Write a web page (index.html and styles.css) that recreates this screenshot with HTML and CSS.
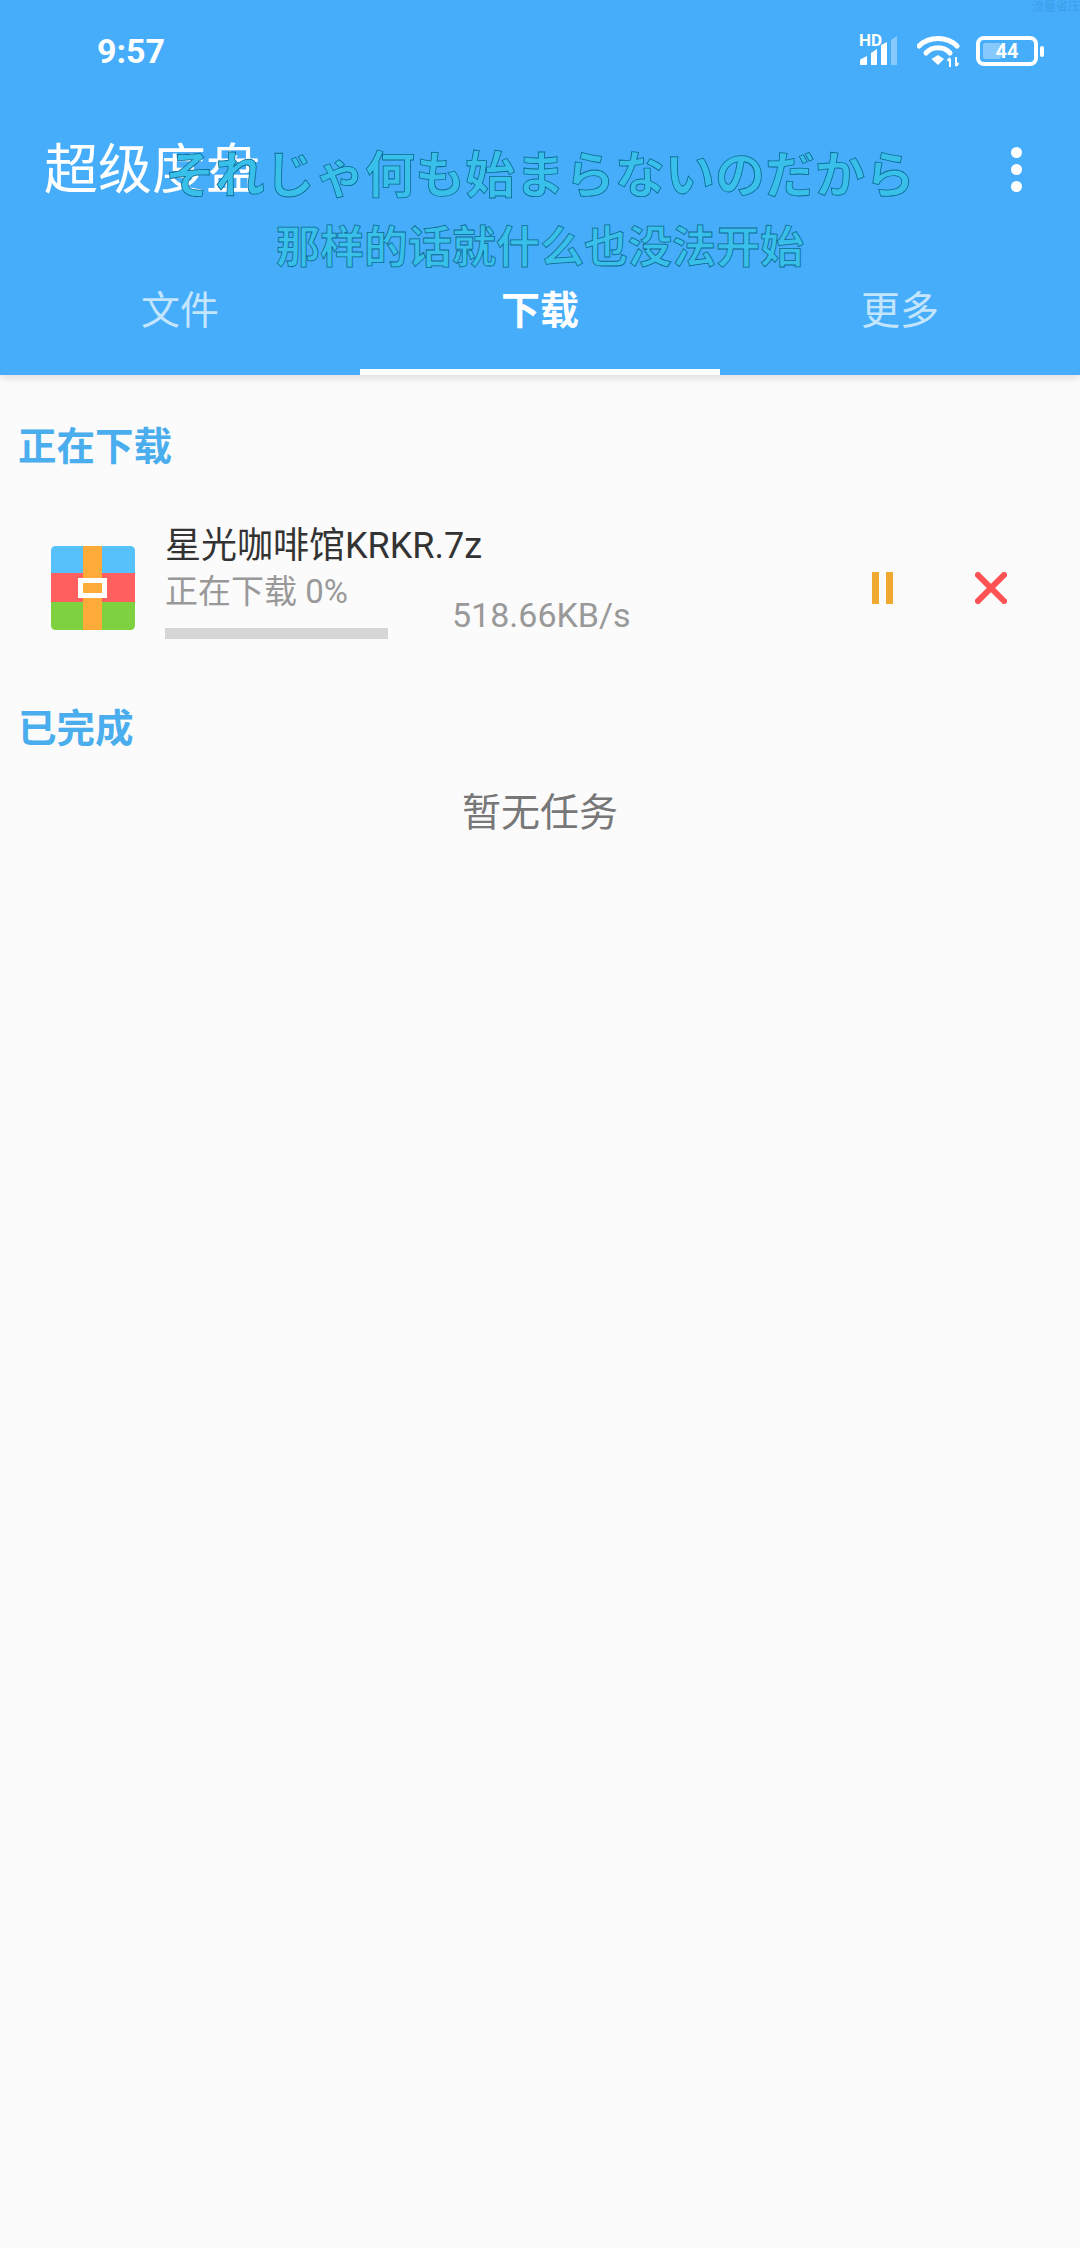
FILE: index.html
```html
<!DOCTYPE html>
<html>
<head>
    <title>超级度盘</title>
    <meta charset="utf-8">
    <link rel="stylesheet" href="styles.css">
</head>
<body>
    <div class="header">
        <div class="status-bar">
            <span class="time">9:57</span>
            <span class="carrier-note">流量省压</span>
            <div class="status-icons">
                <div class="signal">
                    <span class="hd">HD</span>
                    <svg width="40" height="30" viewBox="0 0 40 30">
                        <path d="M0 29 L0 25 Q0 24 1 23 L7 20 L7 29 Z M11 29 L11 17 L17 13 L17 29 Z M21 29 L21 9 L27 6 L27 29 Z" fill="#fff"/>
                        <path d="M31 29 L31 4 L37 0 L37 29 Z" fill="#fff" fill-opacity="0.35"/>
                    </svg>
                </div>
                <svg class="wifi" width="44" height="32" viewBox="0 0 44 32">
                    <path d="M2 10 C12 0 30 0 40 10" fill="none" stroke="#fff" stroke-width="5" stroke-linecap="round"/>
                    <path d="M9 17 C15 10 27 10 33 17" fill="none" stroke="#fff" stroke-width="5" stroke-linecap="round"/>
                    <path d="M14.5 23 L21 19 L27 23 L21 29 Z" fill="#fff"/>
                    <path d="M33 31 L33 23 M30.5 25 L33 22 M39 21 L39 30 M39 30 L41.5 27" fill="none" stroke="#fff" stroke-width="2"/>
                </svg>
                <div class="battery">
                    <div class="battery-body">
                        <div class="battery-fill"></div>
                        <span class="battery-num">44</span>
                    </div>
                    <div class="battery-nub"></div>
                </div>
            </div>
        </div>
        <div class="toolbar">
            <span class="app-title">超级度盘</span>
            <div class="more"><i></i><i></i><i></i></div>
        </div>
        <div class="tabs">
            <div class="tab">文件</div>
            <div class="tab active">下载</div>
            <div class="tab">更多</div>
        </div>
    </div>

    <div class="subtitles">
        <div class="sub-jp">それじゃ何も始まらないのだから</div>
        <div class="sub-cn">那样的话就什么也没法开始</div>
    </div>

    <div class="section-title first">正在下载</div>
    <div class="task">
        <svg class="task-icon" width="84" height="84" viewBox="0 0 84 84">
            <path d="M0 27 L0 5 Q0 0 5 0 L79 0 Q84 0 84 5 L84 27 Z" fill="#56c1fb"/>
            <rect x="0" y="27" width="84" height="29" fill="#ff5f5f"/>
            <path d="M0 56 L84 56 L84 79 Q84 84 79 84 L5 84 Q0 84 0 79 Z" fill="#7ed23f"/>
            <rect x="32" y="0" width="19" height="84" fill="#ffab3a"/>
            <rect x="29.5" y="34.5" width="24" height="15" fill="#ffab3a" stroke="#fff" stroke-width="5"/>
        </svg>
        <div class="task-info">
            <div class="task-name">星光咖啡馆KRKR.7z</div>
            <div class="task-status">正在下载 0%</div>
            <div class="progress"></div>
        </div>
        <div class="task-speed">518.66KB/s</div>
        <svg class="task-btn pause" width="21" height="32" viewBox="0 0 21 32">
            <rect x="0" y="0" width="7" height="32" fill="#f0a930"/>
            <rect x="14" y="0" width="7" height="32" fill="#f0a930"/>
        </svg>
        <svg class="task-btn cancel" width="32" height="32" viewBox="0 0 32 32">
            <path d="M3 3 L29 29 M29 3 L3 29" stroke="#ff5252" stroke-width="6" stroke-linecap="square" fill="none"/>
        </svg>
    </div>

    <div class="section-title">已完成</div>
    <div class="empty">暂无任务</div>
</body>
</html>
```

FILE: styles.css
```css
* {
    box-sizing: border-box;
}
body {
    margin: 0;
    width: 1080px;
    height: 2248px;
    overflow: hidden;
    position: relative;
    background-color: #fbfbfb;
    font-family: Roboto, "Noto Sans CJK SC", sans-serif;
}
.header {
    height: 375px;
    background-color: #46adfb;
    box-shadow: 0 3px 8px rgba(0,0,0,0.12);
    color: white;
}
.status-bar {
    height: 100px;
    display: flex;
    align-items: flex-start;
    padding: 30px 36px 0 97px;
    position: relative;
}
.time {
    font-size: 34px;
    font-weight: 700;
    line-height: 42px;
}
.carrier-note {
    position: absolute;
    top: 0;
    right: 0;
    font-size: 12px;
    line-height: 14px;
    color: #3c9fe8;
}
.status-icons {
    margin-left: auto;
    margin-top: 6px;
    display: flex;
    align-items: flex-start;
    gap: 15px;
}
.signal {
    width: 42px;
    height: 30px;
    position: relative;
}
.signal svg {
    display: block;
}
.hd {
    position: absolute;
    top: -4px;
    left: -1px;
    font-size: 17px;
    line-height: 17px;
    font-weight: 700;
}
.battery {
    display: flex;
    align-items: center;
    gap: 2px;
    height: 30px;
}
.battery-body {
    width: 62px;
    height: 30px;
    border: 4px solid white;
    border-radius: 8px;
    position: relative;
    text-align: center;
}
.battery-fill {
    position: absolute;
    left: 3px;
    top: 3px;
    bottom: 3px;
    width: 18px;
    border-radius: 2px;
    background-color: rgba(255,255,255,0.35);
}
.battery-num {
    position: relative;
    font-size: 20px;
    font-weight: 700;
    line-height: 22px;
    display: block;
}
.battery-nub {
    width: 4px;
    height: 11px;
    border-radius: 2px;
    background-color: white;
}
.toolbar {
    height: 136px;
    display: flex;
    align-items: center;
    justify-content: space-between;
    padding: 0 58px 0 44px;
}
.app-title {
    font-size: 54px;
    line-height: 64px;
    margin-top: 5px;
}
.more {
    margin-top: 2px;
}
.more i {
    display: block;
    width: 11px;
    height: 11px;
    margin: 6px 0;
    border-radius: 50%;
    background-color: white;
}
.tabs {
    height: 139px;
    display: flex;
}
.tab {
    flex: 1;
    height: 139px;
    padding-top: 50px;
    text-align: center;
    font-size: 39px;
    line-height: 50px;
    color: #c3e5fd;
}
.tab.active {
    color: white;
    font-weight: 700;
    border-bottom: 6px solid white;
}
.subtitles {
    position: absolute;
    top: 135px;
    left: 0;
    width: 1080px;
    text-align: center;
    font-family: "Noto Sans CJK JP", sans-serif;
    font-weight: 700;
    color: #39c0ea;
    -webkit-text-stroke: 0.8px #0c6a90;
}
.sub-jp {
    font-size: 50px;
    line-height: 72px;
}
.sub-cn {
    margin-top: 5px;
    font-family: "Noto Sans CJK SC", sans-serif;
    font-size: 44px;
    line-height: 64px;
}
.section-title {
    padding-left: 18px;
    font-size: 38.5px;
    line-height: 50px;
    font-weight: 700;
    color: #4aaeee;
    margin-top: 48px;
}
.section-title.first {
    margin-top: 47px;
}
.task {
    height: 184px;
    display: flex;
    position: relative;
}
.task-icon {
    margin: 74px 0 0 51px;
    flex: none;
}
.task-info {
    margin-left: 30px;
    width: 223px;
    margin-top: 51px;
}
.task-name {
    font-size: 36px;
    line-height: 46px;
    color: #333;
    white-space: nowrap;
}
.task-status {
    font-size: 33px;
    line-height: 44px;
    color: #999;
    white-space: nowrap;
    margin-top: 1px;
}
.progress {
    height: 11px;
    margin-top: 14px;
    background-color: #d6d6d6;
}
.task-speed {
    margin: 121px 0 0 64px;
    font-size: 34px;
    line-height: 44px;
    color: #999;
}
.task-btn {
    flex: none;
    margin-top: 100px;
}
.pause {
    margin-left: 241px;
}
.cancel {
    margin-left: 82px;
}
.empty {
    text-align: center;
    font-size: 39px;
    line-height: 50px;
    color: #777;
    margin-top: 34px;
}
```
